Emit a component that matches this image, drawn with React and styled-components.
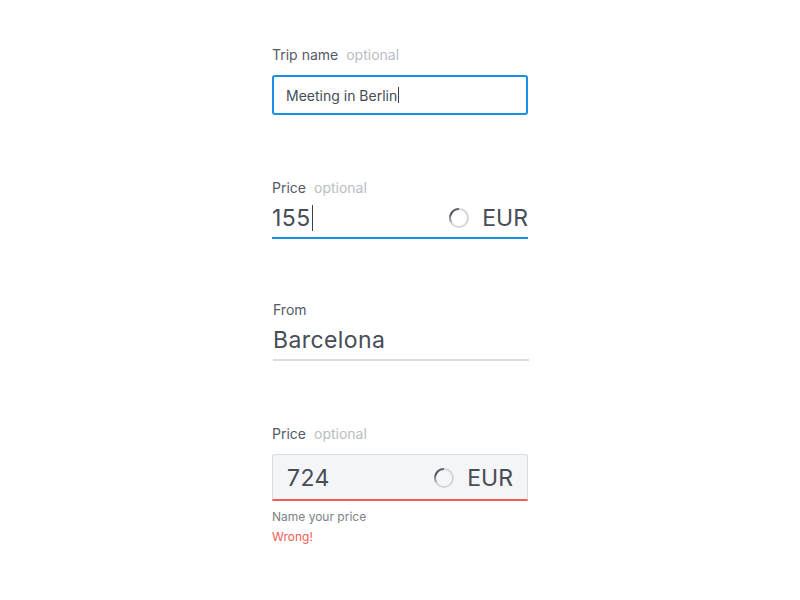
import React from 'react'
import styled, { createGlobalStyle } from 'styled-components'

const GlobalStyle = createGlobalStyle`
	body {
		margin: 0;
		background: #ffffff;
		font-family: Inter, "Liberation Sans", sans-serif;
		color: #474c57;
	}
`

const Page = styled('div')`
	width: 256px;
	margin: 0 auto;
	padding-top: 47px;
	display: flex;
	flex-direction: column;
`

const Field = styled('div')`
	width: 256px;
	display: flex;
	flex-direction: column;
	margin-top: ${p => p.$top || 0}px;
	margin-left: ${p => p.$shift || 0}px;
`

const Label = styled('div')`
	font-size: 14px;
	line-height: 16px;
	color: #555a66;
	margin-bottom: ${p => p.$gap || 0}px;
`

const Optional = styled('span')`
	color: #b9bdc4;
	margin-left: 8px;
`

const Box = styled('div')`
	height: 36px;
	border: 2px solid #1a8fe3;
	border-radius: 3px;
	display: flex;
	align-items: center;
	padding: 0 12px;
	font-size: 14px;
	color: #474c57;
`

const Caret = styled('span')`
	display: inline-block;
	width: 1px;
	height: ${p => p.$size || 16}px;
	background: #3a3f49;
	margin-left: 1px;
	vertical-align: middle;
`

const Line = styled('div')`
	display: flex;
	align-items: center;
	height: ${p => p.$height || 30}px;
	font-size: 23px;
	letter-spacing: 0.4px;
	color: #474c57;
	border-bottom: 2px solid ${p => p.$color};
	padding: 1px 0 4px;
`

const Filled = styled('div')`
	display: flex;
	align-items: center;
	height: 42px;
	padding: 2px 14px 0;
	background: #f4f5f7;
	border: 1px solid #d9dbdf;
	border-bottom: 2px solid #f45b53;
	border-radius: 3px 3px 0 0;
	font-size: 23px;
	letter-spacing: 0.4px;
	color: #474c57;
`

const Value = styled('div')`
	flex: 1;
	display: flex;
	align-items: center;
`

const Currency = styled('div')`
	display: flex;
	align-items: center;
	gap: 12px;
	letter-spacing: 0;
`

const Hint = styled('div')`
	font-size: 12px;
	line-height: 16px;
	color: ${p => (p.$error ? '#f45b53' : '#7d818a')};
	margin-top: ${p => p.$top || 0}px;
`

const Spinner = ({ id }) => (
	<svg width="22" height="22" viewBox="0 0 22 22">
		<defs>
			<linearGradient id={id} x1="0" y1="1" x2="1" y2="0">
				<stop offset="0" stopColor="#c9cbd0" />
				<stop offset="0.35" stopColor="#4a4f5a" />
				<stop offset="1" stopColor="#6a6e78" />
			</linearGradient>
		</defs>
		<circle cx="11" cy="11" r="9" fill="none" stroke="#d3d5d9" strokeWidth="2" />
		<path d="M3.2 15.5 A9 9 0 0 1 11 2" fill="none" stroke={`url(#${id})`} strokeWidth="2" />
	</svg>
)

export default function App() {
	return (
		<>
			<GlobalStyle />
			<Page>
				<Field>
					<Label $gap={12}>
						Trip name<Optional>optional</Optional>
					</Label>
					<Box>
						Meeting in Berlin<Caret $size={16} />
					</Box>
				</Field>

				<Field $top={65}>
					<Label $gap={5}>
						Price<Optional>optional</Optional>
					</Label>
					<Line $color="#1a8fe3" $height={31}>
						<Value>
							155<Caret $size={26} />
						</Value>
						<Currency>
							<Spinner id="sp1" />
							<span>EUR</span>
						</Currency>
					</Line>
				</Field>

				<Field $top={63} $shift={1}>
					<Label $gap={6}>From</Label>
					<Line $color="#d9dbdf" $height={30}>
						<Value>Barcelona</Value>
					</Line>
				</Field>

				<Field $top={65}>
					<Label $gap={12}>
						Price<Optional>optional</Optional>
					</Label>
					<Filled>
						<Value>724</Value>
						<Currency>
							<Spinner id="sp2" />
							<span>EUR</span>
						</Currency>
					</Filled>
					<Hint $top={8}>Name your price</Hint>
					<Hint $error $top={4}>Wrong!</Hint>
				</Field>
			</Page>
		</>
	)
}
